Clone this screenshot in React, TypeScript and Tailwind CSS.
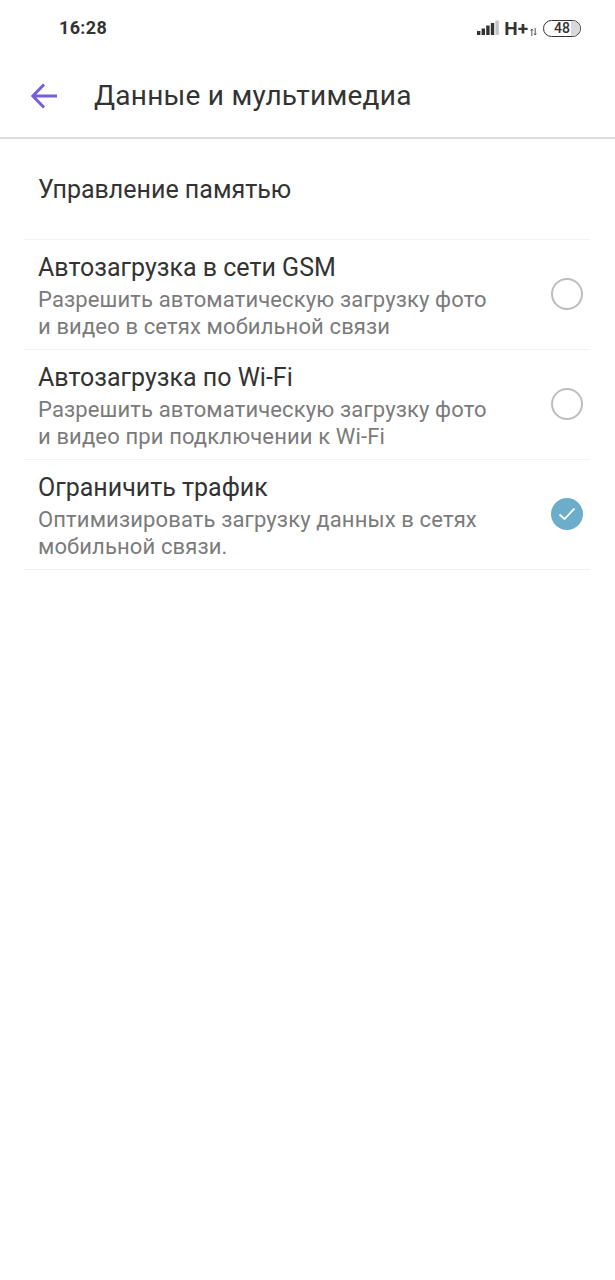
import React from 'react';

const rows = [
  { title: 'Автозагрузка в сети GSM', lines: ['Разрешить автоматическую загрузку фото', 'и видео в сетях мобильной связи'], checked: false },
  { title: 'Автозагрузка по Wi-Fi', lines: ['Разрешить автоматическую загрузку фото', 'и видео при подключении к Wi-Fi'], checked: false },
  { title: 'Ограничить трафик', lines: ['Оптимизировать загрузку данных в сетях', 'мобильной связи.'], checked: true },
];

function StatusBar() {
  return (
    <div className="flex h-[55px] items-center justify-between pl-[59px] pr-[34px] pt-[1px]">
      <span className="text-[18px] font-bold leading-none tracking-[0.35px] text-[#333333]">16:28</span>
      <div className="flex items-center">
        <svg width="22" height="16" viewBox="0 0 22 16" className="mr-[5px]">
          <rect x="0" y="11" width="3.4" height="4" fill="#333333" />
          <rect x="4.6" y="8.5" width="3.4" height="6.5" fill="#333333" />
          <rect x="9.2" y="5.5" width="3.4" height="9.5" fill="#333333" />
          <rect x="13.8" y="3" width="3.4" height="12" fill="#333333" />
          <rect x="18.4" y="0.5" width="3.4" height="14.5" fill="#c4c4c4" />
        </svg>
        <span className="text-[19px] font-bold leading-none text-[#333333]">H+</span>
        <svg width="7" height="8" viewBox="0 0 7 8" className="ml-[2px] mr-[6px] mt-[7px]">
          <path d="M1.8 8V1M0.6 2.5 1.8 1 3 2.5M5.2 0v7M4 5.5 5.2 7l1.2-1.5" stroke="#555555" strokeWidth="1" fill="none" />
        </svg>
        <div className="relative flex h-[17px] w-[38px] items-center justify-center overflow-hidden rounded-full border-[1.5px] border-[#333333]">
          <div className="absolute inset-y-0 right-0 w-[9px] bg-[#d9d9d9]" />
          <span className="relative text-[14px] font-medium leading-none text-[#333333]">48</span>
        </div>
      </div>
    </div>
  );
}

function Check({ checked }: { checked: boolean }) {
  if (checked) {
    return (
      <div className="mb-[2px] flex h-[32px] w-[32px] items-center justify-center rounded-full bg-[#6cadc9]">
        <svg width="18" height="14" viewBox="0 0 18 14" fill="none">
          <path d="M1.5 7.5 6.5 12 16.5 1.5" stroke="white" strokeWidth="1.8" />
        </svg>
      </div>
    );
  }
  return <div className="mb-[2px] h-[32px] w-[32px] rounded-full border-2 border-[#bdbdbd]" />;
}

export default function App() {
  return (
    <div className="h-[1280px] w-[615px] bg-white font-['Roboto',sans-serif]">
      <StatusBar />
      <div className="flex h-[84px] items-center border-b-2 border-[#dcdcdc] pl-[31px]">
        <svg width="27" height="26" viewBox="0 0 27 26" fill="none">
          <path d="M26 13H2M13 1.5 1.8 13 13 24.5" stroke="#7360e0" strokeWidth="3" />
        </svg>
        <h1 className="ml-[36px] text-[28px] font-normal leading-none tracking-[0.25px] text-[#333333]">Данные и мультимедиа</h1>
      </div>
      <div className="ml-[24px] mr-[25px]">
        <div className="flex h-[101px] items-center border-b border-[#f2f2f2] pl-[14px] pt-[1px]">
          <span className="text-[25px] leading-none text-[#333333]">Управление памятью</span>
        </div>
        {rows.map((row) => (
          <div key={row.title} className="flex h-[110px] items-center justify-between border-b border-[#f2f2f2] pl-[14px] pr-[7px]">
            <div className="self-start pt-[12px]">
              <div className="mb-[2px] text-[25px] leading-[32px] text-[#333333]">{row.title}</div>
              {row.lines.map((line) => (
                <div key={line} className="text-[22px] leading-[27px] tracking-[0.13px] text-[#7b7b7b]">{line}</div>
              ))}
            </div>
            <Check checked={row.checked} />
          </div>
        ))}
      </div>
    </div>
  );
}
